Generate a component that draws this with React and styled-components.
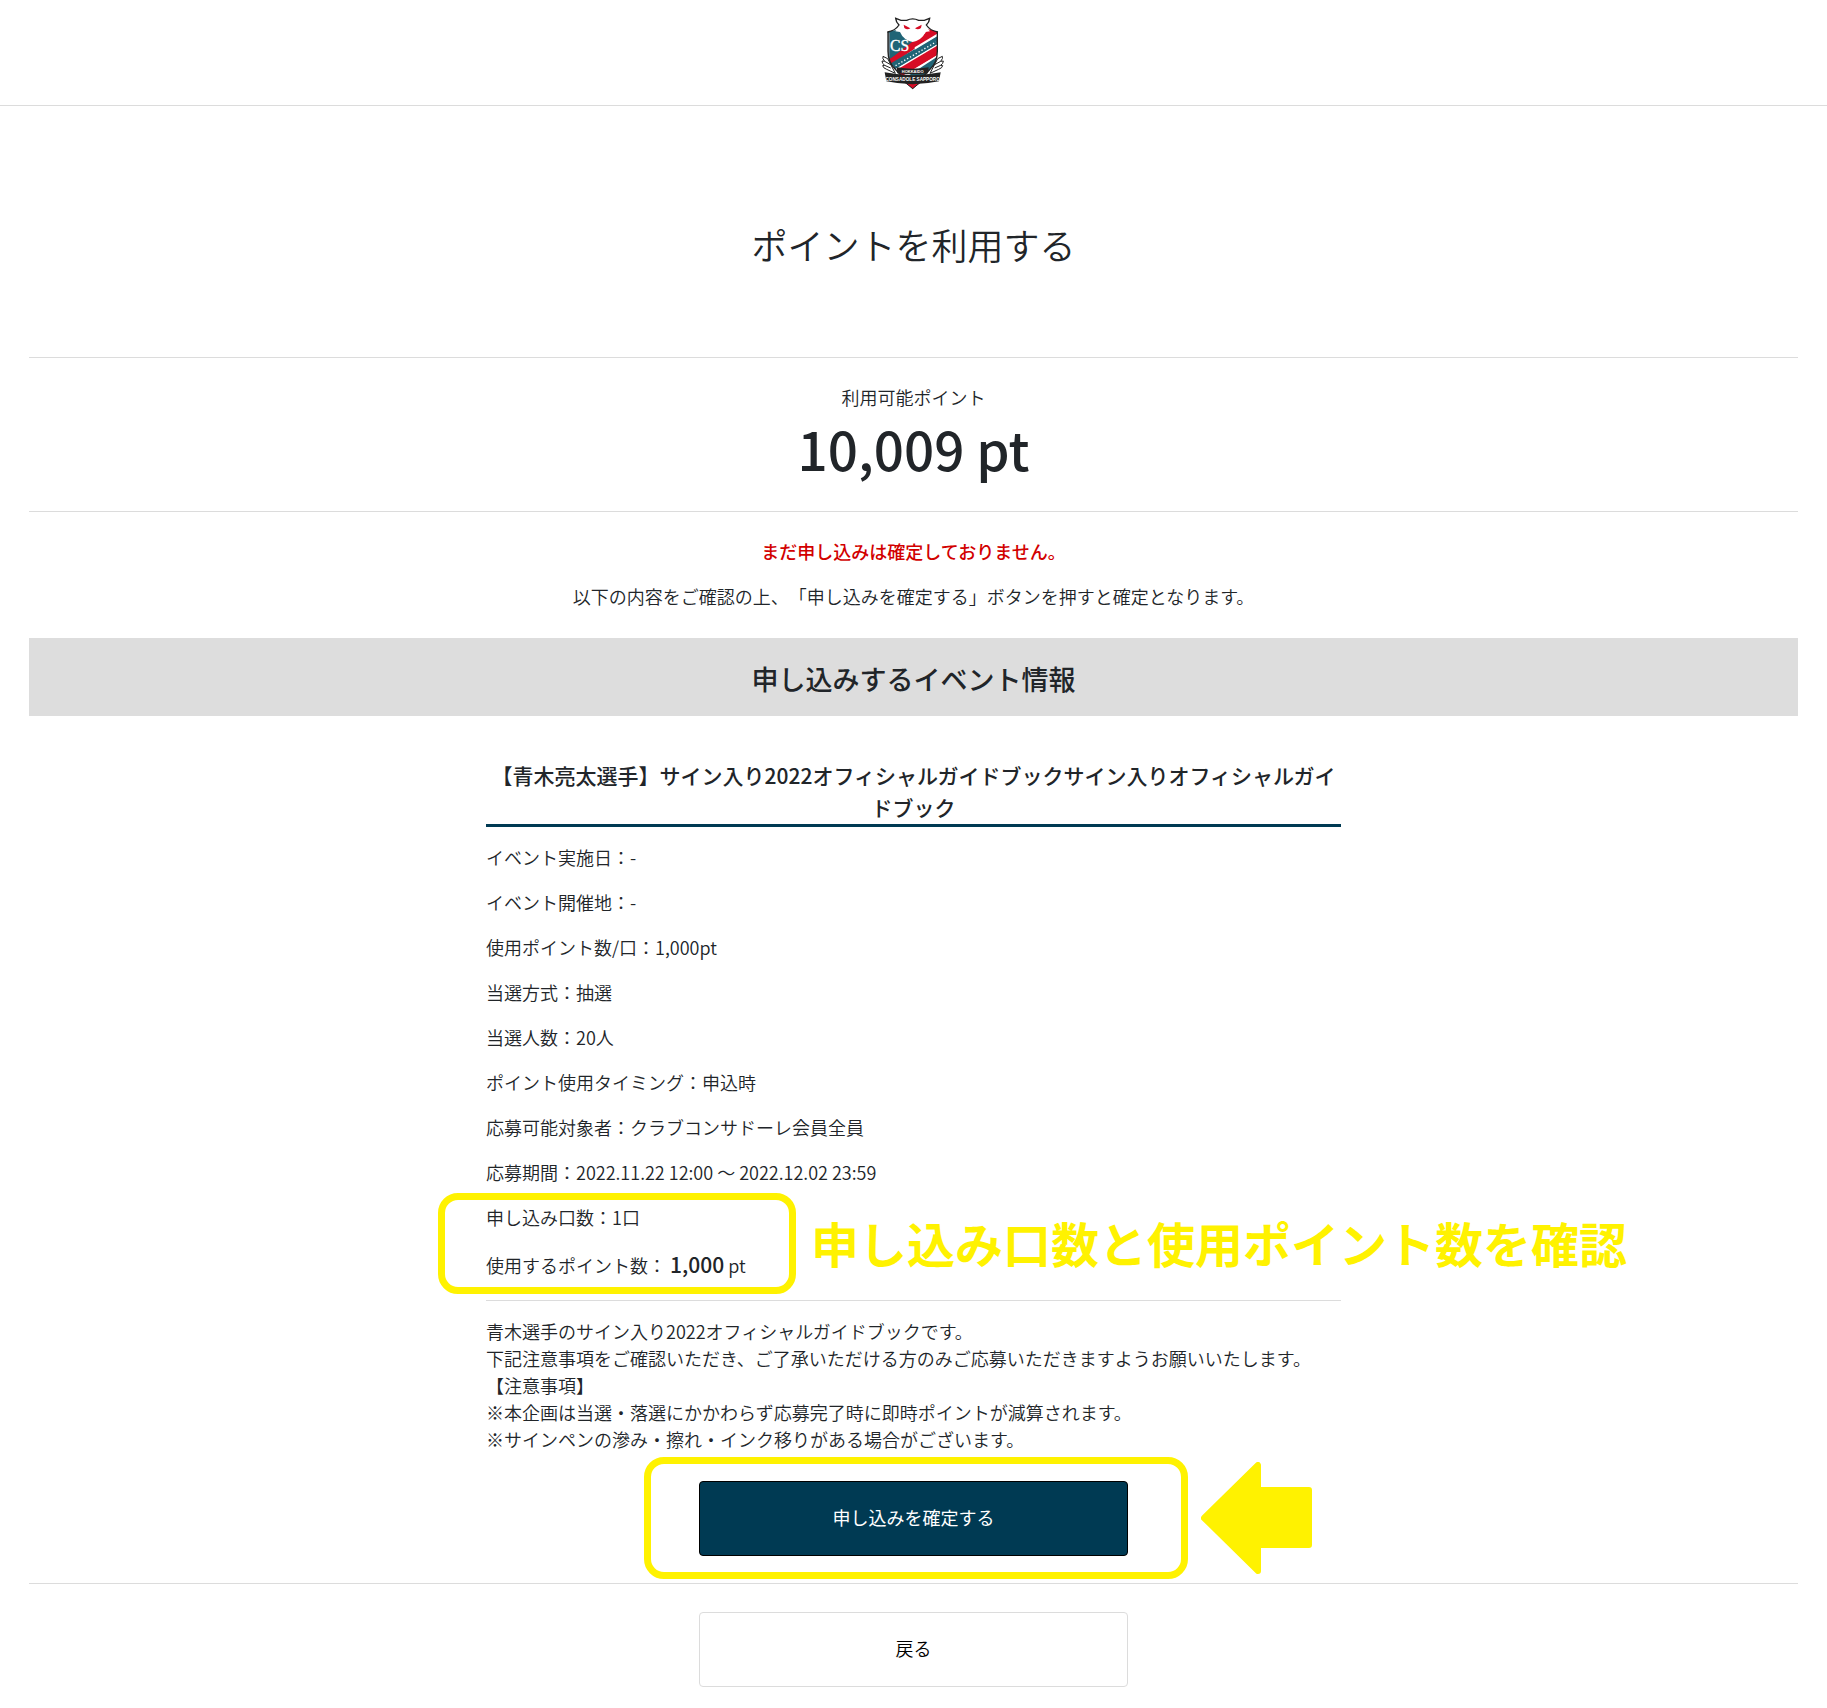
import React from "react";
import styled, { createGlobalStyle } from "styled-components";

const ink = "#212529";
const navy = "#003a53";
const line = "#dcdcdc";
const marker = "#fff200";

const GlobalStyle = createGlobalStyle`
  *, *::before, *::after { box-sizing: border-box; }
  body {
    margin: 0;
    background: #fff;
    color: ${ink};
    font-family: "Noto Sans CJK JP", sans-serif;
    font-size: 18px;
    font-weight: 350;
    line-height: 27px;
    text-spacing-trim: space-all;
  }
  h1, h2, h3, p { margin: 0; }
`;

const Header = styled.header`
  display: flex;
  justify-content: center;
  padding: 14px 2px 13px 0;
  border-bottom: 1px solid ${line};
`;

const HomeLink = styled.a`
  display: block;
  height: 78px;
`;

const Main = styled.main`
  padding: 0 29px 21px;
`;

const PageTitle = styled.h1`
  padding: 111px 0 86px;
  border-bottom: 1px solid ${line};
  font-size: 36px;
  font-weight: 350;
  line-height: 54px;
  text-align: center;
`;

const Balance = styled.section`
  padding: 26px 0;
  border-bottom: 1px solid ${line};
  text-align: center;
`;

const BalanceValue = styled.p`
  font-size: 53px;
  font-weight: 500;
  line-height: 74px;
`;

const Notice = styled.section`
  display: grid;
  gap: 18px;
  padding: 26px 0 28px;
  text-align: center;
`;

const Warning = styled.p`
  color: #d20000;
  font-weight: 500;
`;

const Band = styled.h2`
  padding: 20px 18px 16px;
  background: #ddd;
  font-size: 27px;
  font-weight: 500;
  line-height: 42px;
  text-align: center;
`;

const Details = styled.section`
  max-width: 855px;
  margin: 43px auto 28px;
`;

const EventName = styled.h3`
  padding-bottom: 1px;
  border-bottom: 3px solid ${navy};
  font-size: 21px;
  font-weight: 500;
  line-height: 32px;
  text-align: center;
`;

const Facts = styled.div`
  display: grid;
  gap: 18px;
  padding: 17px 0 20px;
`;

const Checked = styled.div`
  position: relative;
  display: grid;
  gap: 18px;
`;

const Spend = styled.p`
  line-height: 30px;
`;

const Amount = styled.strong`
  font-size: 21px;
  font-weight: 500;
`;

const Description = styled.div`
  padding-top: 17px;
  border-top: 1px solid ${line};
`;

const Actions = styled.div`
  position: relative;
  width: 100%;
  max-width: 429px;
  margin: 0 auto;
`;

const Button = styled.button`
  display: block;
  width: 100%;
  height: 75px;
  padding: 0 0 2px;
  border: 1px solid ${(p) => (p.$primary ? "#000" : line)};
  border-radius: 4px;
  background: ${(p) => (p.$primary ? navy : "#fff")};
  color: ${(p) => (p.$primary ? "#fff" : "#000")};
  font: inherit;
  font-weight: ${(p) => (p.$primary ? 400 : 350)};
  cursor: pointer;
`;

const Footer = styled.footer`
  margin-top: 27px;
  padding-top: 28px;
  border-top: 1px solid ${line};
`;

const Ring = styled.span`
  position: absolute;
  top: ${(p) => p.$top}px;
  left: ${(p) => p.$left}px;
  width: ${(p) => p.$width}px;
  height: ${(p) => p.$height}px;
  border: 7px solid ${marker};
  border-radius: 20px;
  pointer-events: none;
`;

const Callout = styled.strong`
  position: absolute;
  top: 2px;
  left: 325px;
  color: ${marker};
  font-size: 48px;
  font-weight: 700;
  line-height: 72px;
  white-space: nowrap;
`;

const Arrow = styled.svg`
  position: absolute;
  top: -19px;
  left: 502px;
`;

function Crest() {
  return (
    <svg width="66" height="78" viewBox="0 0 198 234" role="img" aria-label="北海道コンサドーレ札幌">
      <clipPath id="shield">
        <path d="M24 54 98 20 172 54V112Q172 146 150 166L98 222 46 166Q24 146 24 112Z" />
      </clipPath>
      <g fill="#fff" stroke="#222" strokeWidth="3" strokeLinejoin="round">
        <path d="M23 134 9 127Q6 133 14 142L6 141Q6 149 14 154L8 155Q9 162 20 166L46 178Z" />
        <path d="M173 134 187 127Q190 133 182 142L190 141Q190 149 182 154L188 155Q187 162 176 166L150 178Z" />
        <path d="M14 142 32 152M14 154 32 162M182 142 164 152M182 154 164 162" />
      </g>
      <g clipPath="url(#shield)">
        <path d="M20 20H176V226H20Z" fill="#fff" />
        <path d="M22 50 60 48Q76 78 104 80L98 98 22 146Z" fill="#206476" />
        <path d="M104 78Q130 74 142 46L174 50V60L60 130 24 152V140Z" fill="#d70c25" />
        <path d="M24 138 96 94 110 100 24 160Z" fill="#d70c25" />
        <path d="M22 154 174 64V90L22 180Z" fill="#206476" />
        <path d="M104 100 174 58V65L104 107Z" fill="#fff" />
        <path d="M22 180 174 90V94L22 184Z" fill="#fff" />
        <path d="M22 184 174 94V122L60 192Z" fill="#d70c25" />
        <path d="M60 190 174 122V127L70 192Z" fill="#fff" />
        <path d="M78 190 174 127V190Z" fill="#206476" />
        <path d="M38 160 168 84" stroke="#fff" strokeWidth="4" strokeDasharray="4 6" />
        <path d="M22 56H29V134H22Z" fill="#7d868c" />
      </g>
      <path d="M24 54V112Q24 146 46 166L98 222 150 166Q172 146 172 112V54" fill="none" stroke="#222" strokeWidth="4" />
      <path
        d="M47 13 63 21H80Q98 13 116 21H133L149 13Q148 24 139 33Q140 44 150 52L136 54Q126 78 98 84Q70 78 60 54L46 52Q56 44 57 33Q48 24 47 13Z"
        fill="#fff"
      />
      <path
        d="M22 54Q46 50 57 33Q48 24 47 13L63 19H80Q98 10 116 19H133L149 13Q148 24 139 33Q150 50 174 54"
        fill="none"
        stroke="#222"
        strokeWidth="4"
      />
      <path d="M71 32 91 43Q82 49 73 42ZM125 32 105 43Q114 49 123 42Z" fill="#d70c25" />
      <text x="30" y="110" fill="#fff" stroke="#fff" strokeWidth="1" fontFamily="Liberation Serif, serif" fontSize="47">CS</text>
      <path d="M50 160Q98 168 146 160L144 178Q98 184 52 178Z" fill="#222" />
      <text x="98" y="176" fill="#fff" fontFamily="Liberation Sans, sans-serif" fontSize="12" fontWeight="700" textAnchor="middle">HOKKAIDO</text>
      <path d="M76 206 98 224 120 206Z" fill="#d70c25" stroke="#222" strokeWidth="3" />
      <path d="M14 175Q98 192 182 175L177 202Q98 219 19 202Z" fill="#222" />
      <text x="98" y="202" fill="#fff" fontFamily="Liberation Sans, sans-serif" fontSize="14" fontWeight="700" textAnchor="middle">CONSADOLE SAPPORO</text>
    </svg>
  );
}

const facts = [
  ["イベント実施日", "-"],
  ["イベント開催地", "-"],
  ["使用ポイント数/口", "1,000pt"],
  ["当選方式", "抽選"],
  ["当選人数", "20人"],
  ["ポイント使用タイミング", "申込時"],
  ["応募可能対象者", "クラブコンサドーレ会員全員"],
  ["応募期間", "2022.11.22 12:00 ～ 2022.12.02 23:59"],
];

const description = [
  "青木選手のサイン入り2022オフィシャルガイドブックです。",
  "下記注意事項をご確認いただき、ご了承いただける方のみご応募いただきますようお願いいたします。",
  "【注意事項】",
  "※本企画は当選・落選にかかわらず応募完了時に即時ポイントが減算されます。",
  "※サインペンの滲み・擦れ・インク移りがある場合がございます。",
];

export default function App() {
  return (
    <div lang="ja">
      <GlobalStyle />
      <Header>
        <HomeLink href="#">
          <Crest />
        </HomeLink>
      </Header>
      <Main>
        <PageTitle>ポイントを利用する</PageTitle>
        <Balance>
          <p>利用可能ポイント</p>
          <BalanceValue>10,009 pt</BalanceValue>
        </Balance>
        <Notice>
          <Warning>まだ申し込みは確定しておりません。</Warning>
          <p>以下の内容をご確認の上、「申し込みを確定する」ボタンを押すと確定となります。</p>
        </Notice>
        <Band>申し込みするイベント情報</Band>
        <Details>
          <EventName>
            【青木亮太選手】サイン入り2022オフィシャルガイドブックサイン入りオフィシャルガイドブック
          </EventName>
          <Facts>
            {facts.map(([label, value]) => (
              <p key={label}>{`${label}：${value}`}</p>
            ))}
            <Checked>
              <p>申し込み口数：1口</p>
              <Spend>
                使用するポイント数： <Amount>1,000</Amount> pt
              </Spend>
              <Ring $top={-11} $left={-48} $width={358} $height={101} />
              <Callout>申し込み口数と使用ポイント数を確認</Callout>
            </Checked>
          </Facts>
          <Description>
            {description.map((text) => (
              <p key={text}>{text}</p>
            ))}
          </Description>
        </Details>
        <Actions>
          <Button type="submit" $primary>申し込みを確定する</Button>
          <Ring $top={-24} $left={-55} $width={544} $height={122} />
          <Arrow width="111" height="112" viewBox="0 0 111 112" aria-hidden="true">
            <path
              d="M3 56 57 3V28H108V83H57V109Z"
              fill={marker}
              stroke={marker}
              strokeWidth="6"
              strokeLinejoin="round"
            />
          </Arrow>
        </Actions>
        <Footer>
          <Actions>
            <Button type="button">戻る</Button>
          </Actions>
        </Footer>
      </Main>
    </div>
  );
}
